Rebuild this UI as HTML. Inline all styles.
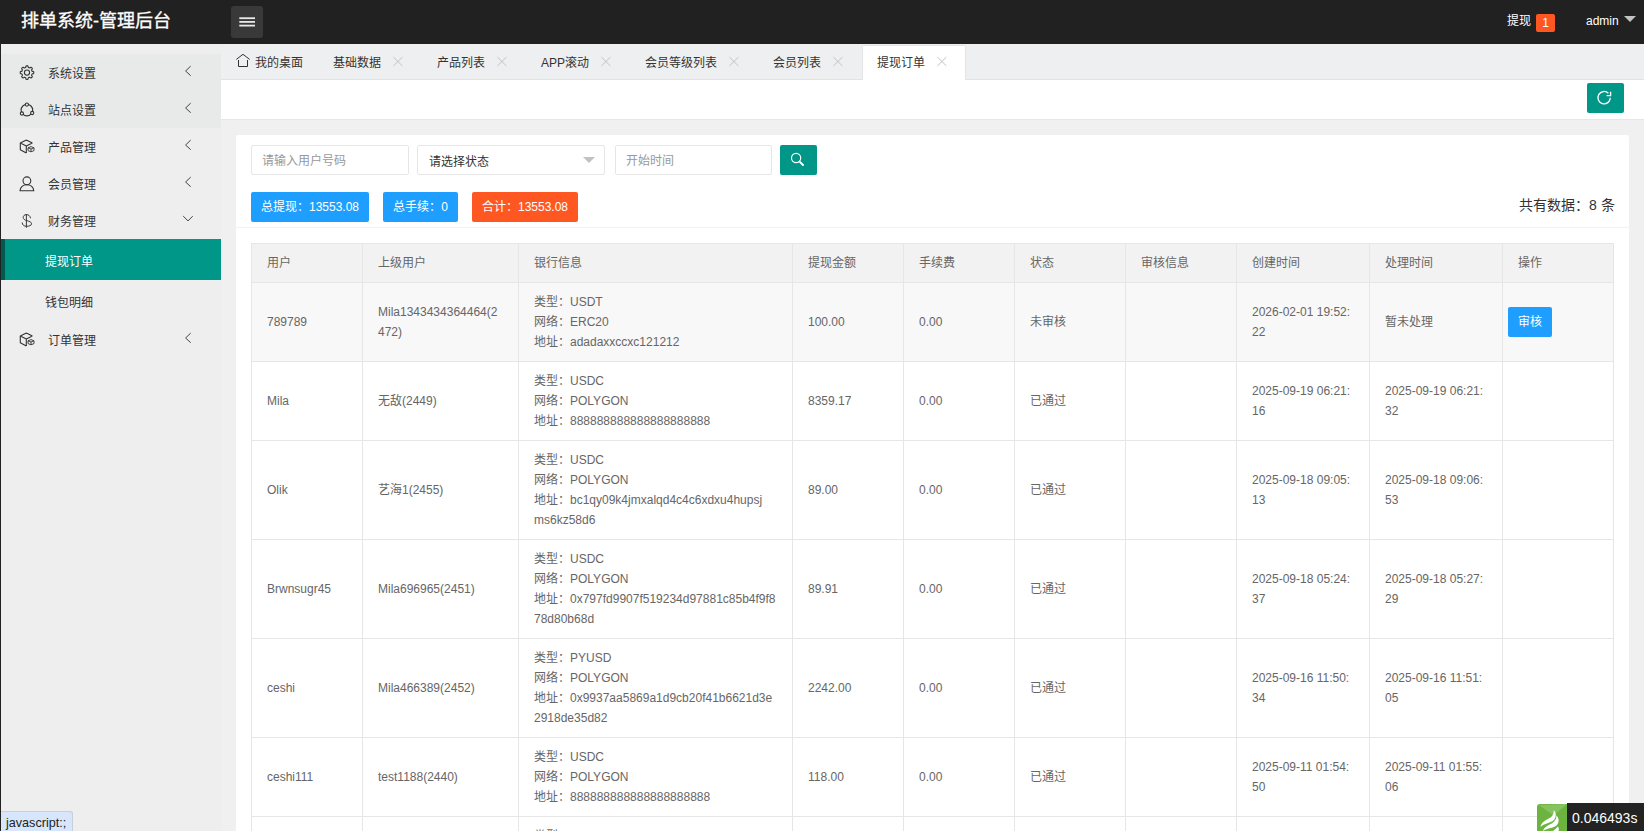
<!DOCTYPE html>
<html lang="zh-CN">
<head>
<meta charset="utf-8">
<style>
*{margin:0;padding:0;box-sizing:border-box;}
html,body{width:1644px;height:831px;overflow:hidden;}
body{position:relative;background:#f0f0f0;font-family:"Liberation Sans",sans-serif;font-size:12px;color:#333;}
.abs{position:absolute;}
#hdr{left:0;top:0;width:1644px;height:44px;background:#212121;}
#title{left:21px;top:9px;font-size:18px;line-height:24px;color:#fff;white-space:nowrap;-webkit-text-stroke:0.3px #fff;}
#burger{left:231px;top:6px;width:32px;height:32px;background:#393939;border-radius:3px;}
#side{left:0;top:44px;width:221px;height:787px;background:#eeeeee;}
#lstrip{left:0;top:44px;width:1px;height:787px;background:#222;}
.mi{position:absolute;left:1px;width:220px;height:37px;}
.mi .t{position:absolute;left:47px;top:2px;line-height:37px;font-size:12px;color:#333;white-space:nowrap;}
.mi svg{position:absolute;}
.sub{position:absolute;left:1px;width:220px;height:41px;}
.sub .t{position:absolute;left:44px;top:3px;line-height:41px;font-size:12px;color:#333;}
#tabs{left:221px;top:44px;width:1423px;height:36px;background:#eeeff1;border-bottom:1px solid #e2e2e2;}
.tab{position:absolute;margin-top:2px;height:35px;line-height:35px;font-size:12px;color:#333;white-space:nowrap;}
.x{position:absolute;top:13px;width:10px;height:10px;}
#toolbar{left:221px;top:80px;width:1423px;height:40px;background:#fff;border-bottom:1px solid #e6e6e6;}
#card{left:236px;top:135px;width:1393px;height:720px;background:#fff;border-radius:2px;}
.inp{position:absolute;top:145px;height:30px;border:1px solid #e6e6e6;border-radius:2px;background:#fff;font-size:12px;line-height:30px;padding-left:10px;color:#999;white-space:nowrap;}
.btn{position:absolute;top:192px;height:30px;line-height:30px;border-radius:2px;color:#fff;font-size:12px;text-align:center;white-space:nowrap;}
table{position:absolute;left:251px;top:243px;border-collapse:collapse;table-layout:fixed;width:1362px;color:#666;}
td,th{border:1px solid #e6e6e6;padding:9px 15px;line-height:20px;font-size:12px;font-weight:normal;text-align:left;vertical-align:middle;word-break:break-all;}
th{background:#f2f2f2;}
tr.hov td{background:#f8f8f8;}
</style>
</head>
<body>
<div id="hdr" class="abs"></div>
<div id="title" class="abs">排单系统-管理后台</div>
<div id="burger" class="abs">
<svg width="32" height="32" viewBox="0 0 32 32"><g fill="#e8e8e8"><rect x="8.3" y="11.3" width="15.7" height="1.8"/><rect x="8.3" y="15" width="15.7" height="1.8"/><rect x="8.3" y="18.7" width="15.7" height="1.8"/></g></svg>
</div>
<div class="abs" style="left:1507px;top:12px;font-size:12px;line-height:18px;color:#fff;">提现</div>
<div class="abs" style="left:1536px;top:14px;width:19px;height:18px;background:#ff5722;border-radius:2px;color:#fff;font-size:12px;line-height:18px;text-align:center;">1</div>
<div class="abs" style="left:1586px;top:12px;font-size:12px;line-height:18px;color:#fff;">admin</div>
<div class="abs" style="left:1624px;top:16px;width:0;height:0;border-left:6px solid transparent;border-right:6px solid transparent;border-top:6px solid #c2c2c2;"></div>

<div id="side" class="abs"></div>
<div id="lstrip" class="abs"></div>
<!-- sidebar items -->
<div class="mi" style="top:54px;background:#e8eaea;"><span class="t">系统设置</span></div>
<div class="mi" style="top:91px;background:#e8eaea;"><span class="t">站点设置</span></div>
<div class="mi" style="top:128px;"><span class="t">产品管理</span></div>
<div class="mi" style="top:165px;"><span class="t">会员管理</span></div>
<div class="mi" style="top:202px;"><span class="t">财务管理</span></div>
<div class="sub" style="top:239px;background:#009688;border-left:4px solid #005a52;"><span class="t" style="color:#fff;left:40px;">提现订单</span></div>
<div class="sub" style="top:280px;"><span class="t">钱包明细</span></div>
<div class="mi" style="top:321px;"><span class="t">订单管理</span></div>


<svg class="abs" style="left:0;top:44px;" width="221" height="320" viewBox="0 44 221 320" fill="none" stroke="#333" stroke-width="1.1">
<!-- gear -->
<path d="M31.85 74.61 L31.80 74.74 L31.74 74.86 L31.68 74.98 L31.61 75.11 L31.55 75.22 L31.68 75.47 L31.89 75.77 L32.09 76.10 L32.27 76.43 L32.36 76.71 L32.25 76.85 L32.13 76.98 L32.02 77.12 L31.90 77.25 L31.77 77.37 L31.65 77.50 L31.52 77.62 L31.38 77.73 L31.25 77.85 L31.11 77.96 L30.83 77.87 L30.50 77.69 L30.17 77.49 L29.87 77.28 L29.62 77.15 L29.51 77.21 L29.38 77.28 L29.26 77.34 L29.14 77.40 L29.01 77.45 L28.88 77.50 L28.75 77.55 L28.62 77.59 L28.49 77.63 L28.36 77.67 L28.28 77.94 L28.21 78.30 L28.12 78.67 L28.02 79.03 L27.88 79.29 L27.71 79.31 L27.53 79.33 L27.35 79.34 L27.18 79.35 L27.00 79.35 L26.82 79.35 L26.65 79.34 L26.47 79.33 L26.29 79.31 L26.12 79.29 L25.98 79.03 L25.88 78.67 L25.79 78.30 L25.72 77.94 L25.64 77.67 L25.51 77.63 L25.38 77.59 L25.25 77.55 L25.12 77.50 L24.99 77.45 L24.86 77.40 L24.74 77.34 L24.62 77.28 L24.49 77.21 L24.38 77.15 L24.13 77.28 L23.83 77.49 L23.50 77.69 L23.17 77.87 L22.89 77.96 L22.75 77.85 L22.62 77.73 L22.48 77.62 L22.35 77.50 L22.23 77.37 L22.10 77.25 L21.98 77.12 L21.87 76.98 L21.75 76.85 L21.64 76.71 L21.73 76.43 L21.91 76.10 L22.11 75.77 L22.32 75.47 L22.45 75.22 L22.39 75.11 L22.32 74.98 L22.26 74.86 L22.20 74.74 L22.15 74.61 L22.10 74.48 L22.05 74.35 L22.01 74.22 L21.97 74.09 L21.93 73.96 L21.66 73.88 L21.30 73.81 L20.93 73.72 L20.57 73.62 L20.31 73.48 L20.29 73.31 L20.27 73.13 L20.26 72.95 L20.25 72.78 L20.25 72.60 L20.25 72.42 L20.26 72.25 L20.27 72.07 L20.29 71.89 L20.31 71.72 L20.57 71.58 L20.93 71.48 L21.30 71.39 L21.66 71.32 L21.93 71.24 L21.97 71.11 L22.01 70.98 L22.05 70.85 L22.10 70.72 L22.15 70.59 L22.20 70.46 L22.26 70.34 L22.32 70.22 L22.39 70.09 L22.45 69.97 L22.32 69.73 L22.11 69.43 L21.91 69.10 L21.73 68.77 L21.64 68.49 L21.75 68.35 L21.87 68.22 L21.98 68.08 L22.10 67.95 L22.23 67.83 L22.35 67.70 L22.48 67.58 L22.62 67.47 L22.75 67.35 L22.89 67.24 L23.17 67.33 L23.50 67.51 L23.83 67.71 L24.13 67.92 L24.37 68.05 L24.49 67.99 L24.62 67.92 L24.74 67.86 L24.86 67.80 L24.99 67.75 L25.12 67.70 L25.25 67.65 L25.38 67.61 L25.51 67.57 L25.64 67.53 L25.72 67.26 L25.79 66.90 L25.88 66.53 L25.98 66.17 L26.12 65.91 L26.29 65.89 L26.47 65.87 L26.65 65.86 L26.82 65.85 L27.00 65.85 L27.18 65.85 L27.35 65.86 L27.53 65.87 L27.71 65.89 L27.88 65.91 L28.02 66.17 L28.12 66.53 L28.21 66.90 L28.28 67.26 L28.36 67.53 L28.49 67.57 L28.62 67.61 L28.75 67.65 L28.88 67.70 L29.01 67.75 L29.14 67.80 L29.26 67.86 L29.38 67.92 L29.51 67.99 L29.62 68.05 L29.87 67.92 L30.17 67.71 L30.50 67.51 L30.83 67.33 L31.11 67.24 L31.25 67.35 L31.38 67.47 L31.52 67.58 L31.65 67.70 L31.77 67.83 L31.90 67.95 L32.02 68.08 L32.13 68.22 L32.25 68.35 L32.36 68.49 L32.27 68.77 L32.09 69.10 L31.89 69.43 L31.68 69.73 L31.55 69.97 L31.61 70.09 L31.68 70.22 L31.74 70.34 L31.80 70.46 L31.85 70.59 L31.90 70.72 L31.95 70.85 L31.99 70.98 L32.03 71.11 L32.07 71.24 L32.34 71.32 L32.70 71.39 L33.07 71.48 L33.43 71.58 L33.69 71.72 L33.71 71.89 L33.73 72.07 L33.74 72.25 L33.75 72.42 L33.75 72.60 L33.75 72.78 L33.74 72.95 L33.73 73.13 L33.71 73.31 L33.69 73.48 L33.43 73.62 L33.07 73.72 L32.70 73.81 L32.34 73.88 L32.07 73.96 L32.03 74.09 L31.99 74.22 L31.95 74.35 L31.90 74.48 L31.85 74.61Z" stroke-linejoin="round"/>
<circle cx="27.0" cy="72.6" r="2.6"/>
<!-- share/circle -->
<circle cx="26.9" cy="110.1" r="5.8"/>
<g fill="#e8eaea"><circle cx="26.9" cy="104.6" r="1.6"/><circle cx="21.9" cy="113.5" r="1.6"/><circle cx="32.2" cy="113" r="1.6"/></g>
<!-- cube 1 -->
<g><path d="M26.3 140 L20.3 143.1 L20.3 149.8 L26.3 153 M26.3 140 L32.4 143.1 M20.3 143.1 L26.3 146 L26.3 153 M26.3 146 L32.4 143.1" stroke-linejoin="round"/>
<path d="M28 147.8 L31 146.6 L34 147.8 L34 150.6 L31 151.8 L28 150.6 Z M28 147.8 L31 149 L34 147.8 M31 149 L31 151.8" stroke-width="0.9"/></g>
<!-- user -->
<circle cx="26.9" cy="180.8" r="3.9"/>
<path d="M20 190.8 C20.5 186.5 23.3 184.7 26.9 184.7 C30.5 184.7 33.3 186.5 33.8 190.8 Z" stroke-linejoin="round"/>
<!-- dollar -->
<path d="M30.5 218.3 C30.2 215.8 28.5 214.6 26.4 214.6 C24.4 214.6 23.2 215.8 23.2 217.4 C23.2 219.2 24.8 220 26.4 220.5 C29 221.3 31.6 222 31.6 223.8 C31.6 225.4 29.2 226.3 26.4 226.3 C24 226.3 22.2 224.8 22.2 222.5 M26.4 214 L26.4 227.8" stroke-width="0.95"/>
<!-- arrows -->
<path d="M190.7 66.1 L185.6 71 L190.7 75.7 M190.7 103.1 L185.6 108 L190.7 112.7 M190.7 140.1 L185.6 145 L190.7 149.7 M190.7 177.1 L185.6 182 L190.7 186.7 M190.7 333.1 L185.6 338 L190.7 342.7 M183.2 216.1 L188 220.9 L192.7 216.2" stroke-width="0.95" stroke="#3a3a3a"/>
<g transform="translate(0 193)"><path d="M26.3 140 L20.3 143.1 L20.3 149.8 L26.3 153 M26.3 140 L32.4 143.1 M20.3 143.1 L26.3 146 L26.3 153 M26.3 146 L32.4 143.1" stroke-linejoin="round"/>
<path d="M28 147.8 L31 146.6 L34 147.8 L34 150.6 L31 151.8 L28 150.6 Z M28 147.8 L31 149 L34 147.8 M31 149 L31 151.8" stroke-width="0.9"/></g>
</svg>

<div id="tabs" class="abs"></div>
<div class="abs" style="left:862px;top:45px;width:104px;height:35px;background:#fff;border:1px solid #e4e4e4;border-bottom:none;border-radius:2px 2px 0 0;"></div>
<div class="tab" style="left:255px;top:44px;">我的桌面</div>
<div class="tab" style="left:333px;top:44px;">基础数据</div>
<div class="tab" style="left:437px;top:44px;">产品列表</div>
<div class="tab" style="left:541px;top:44px;">APP滚动</div>
<div class="tab" style="left:645px;top:44px;">会员等级列表</div>
<div class="tab" style="left:773px;top:44px;">会员列表</div>
<div class="tab" style="left:877px;top:44px;">提现订单</div>


<svg class="abs" style="left:221px;top:44px;" width="760" height="36" viewBox="221 44 760 36" fill="none">
<path d="M236.3 59.4 L243 54.3 L249.6 59.4 M238.5 60 L238.5 66.5 L247.5 66.5 L247.5 60" stroke="#333" stroke-width="1"/>
<g stroke="#c2c2c2" stroke-width="1">
<path d="M393.5 57.2 L402.3 65.8 M402.3 57.2 L393.5 65.8"/>
<path d="M497.5 57.2 L506.3 65.8 M506.3 57.2 L497.5 65.8"/>
<path d="M601.5 57.2 L610.3 65.8 M610.3 57.2 L601.5 65.8"/>
<path d="M729.5 57.2 L738.3 65.8 M738.3 57.2 L729.5 65.8"/>
<path d="M833.5 57.2 L842.3 65.8 M842.3 57.2 L833.5 65.8"/>
<path d="M937.5 57.2 L946.3 65.8 M946.3 57.2 L937.5 65.8"/>
</g>
</svg>

<div id="toolbar" class="abs"></div>
<div class="abs" style="left:1587px;top:83px;width:37px;height:30px;background:#009688;border-radius:2px;"></div>
<svg class="abs" style="left:1587px;top:83px;" width="37" height="30" viewBox="1587 83 37 30" fill="none" stroke="#fff" stroke-width="1.3">
<path d="M1610.3 97.8 A6.2 6.2 0 1 1 1608.4 93.2"/>
<path d="M1610.6 91.8 L1610.6 95.6 L1606.6 95.6"/>
</svg>

<div id="card" class="abs"></div>
<div class="inp" style="left:251px;width:158px;">请输入用户号码</div>
<div class="inp" style="left:417px;width:188px;color:#333;padding-left:11px;line-height:32px;">请选择状态</div>
<div class="inp" style="left:615px;width:157px;">开始时间</div>
<div class="abs" style="left:583px;top:157px;width:0;height:0;border-left:6px solid transparent;border-right:6px solid transparent;border-top:6px solid #c2c2c2;"></div>
<div class="abs" style="left:780px;top:145px;width:37px;height:30px;background:#009688;border-radius:2px;"></div>
<svg class="abs" style="left:780px;top:145px;" width="37" height="30" viewBox="780 145 37 30" fill="none" stroke="#fff">
<circle cx="796.1" cy="158" r="4.6" stroke-width="1.2"/>
<path d="M799.6 161.6 L803 165" stroke-width="2" stroke-linecap="round"/>
</svg>

<div class="btn" style="left:251px;width:118px;background:#1e9fff;">总提现：13553.08</div>
<div class="btn" style="left:383px;width:75px;background:#1e9fff;">总手续：0</div>
<div class="btn" style="left:472px;width:106px;background:#ff5722;">合计：13553.08</div>
<div class="abs" style="left:1519px;top:195px;font-size:14px;line-height:20px;color:#333;white-space:nowrap;">共有数据：8 条</div>
<div class="abs" style="left:236px;top:227px;width:1393px;height:1px;background:#f2f2f2;"></div>

<table>
<colgroup><col style="width:111px"><col style="width:156px"><col style="width:274px"><col style="width:111px"><col style="width:111px"><col style="width:111px"><col style="width:111px"><col style="width:133px"><col style="width:133px"><col style="width:111px"></colgroup>
<thead><tr><th>用户</th><th>上级用户</th><th>银行信息</th><th>提现金额</th><th>手续费</th><th>状态</th><th>审核信息</th><th>创建时间</th><th>处理时间</th><th>操作</th></tr></thead>
<tbody>
<tr class="hov"><td>789789</td><td>Mila1343434364464(2472)</td><td>类型：USDT<br>网络：ERC20<br>地址：adadaxxccxc121212</td><td>100.00</td><td>0.00</td><td>未审核</td><td></td><td>2026-02-01 19:52:22</td><td>暂未处理</td><td style="padding-left:5px;"><span style="display:inline-block;background:#1e9fff;color:#fff;height:30px;line-height:30px;padding:0 10px;border-radius:2px;">审核</span></td></tr>
<tr><td>Mila</td><td>无敌(2449)</td><td>类型：USDC<br>网络：POLYGON<br>地址：888888888888888888888</td><td>8359.17</td><td>0.00</td><td>已通过</td><td></td><td>2025-09-19 06:21:16</td><td>2025-09-19 06:21:32</td><td></td></tr>
<tr><td>Olik</td><td>艺海1(2455)</td><td>类型：USDC<br>网络：POLYGON<br>地址：bc1qy09k4jmxalqd4c4c6xdxu4hupsj<br>ms6kz58d6</td><td>89.00</td><td>0.00</td><td>已通过</td><td></td><td>2025-09-18 09:05:13</td><td>2025-09-18 09:06:53</td><td></td></tr>
<tr><td>Brwnsugr45</td><td>Mila696965(2451)</td><td>类型：USDC<br>网络：POLYGON<br>地址：0x797fd9907f519234d97881c85b4f9f878d80b68d</td><td>89.91</td><td>0.00</td><td>已通过</td><td></td><td>2025-09-18 05:24:37</td><td>2025-09-18 05:27:29</td><td></td></tr>
<tr><td>ceshi</td><td>Mila466389(2452)</td><td>类型：PYUSD<br>网络：POLYGON<br>地址：0x9937aa5869a1d9cb20f41b6621d3e2918de35d82</td><td>2242.00</td><td>0.00</td><td>已通过</td><td></td><td>2025-09-16 11:50:34</td><td>2025-09-16 11:51:05</td><td></td></tr>
<tr><td>ceshi111</td><td>test1188(2440)</td><td>类型：USDC<br>网络：POLYGON<br>地址：888888888888888888888</td><td>118.00</td><td>0.00</td><td>已通过</td><td></td><td>2025-09-11 01:54:50</td><td>2025-09-11 01:55:06</td><td></td></tr>
<tr><td>x</td><td>x</td><td>类型：USDC<br>网络：POLYGON<br>地址：888</td><td></td><td></td><td></td><td></td><td></td><td></td><td></td></tr>
</tbody>
</table>

<div class="abs" style="left:1px;top:811px;width:72px;height:20px;background:#d8e6fc;border:1px solid #c9cfd8;border-left:none;border-bottom:none;border-radius:0 3px 0 0;font-size:12.6px;line-height:22px;padding-left:5px;color:#222;white-space:nowrap;">javascript:;</div>
<svg class="abs" style="left:1537px;top:804px;" width="30" height="27" viewBox="0 0 30 27">
<path d="M0 3 Q0 0 3 0 L30 0 L30 27 L0 27 Z" fill="#6db33f"/>
<path d="M2 1 L16.5 11.5 L30 0 Z" fill="#86c360"/>
<path d="M3.5 23 C4 18 10 15.5 13.5 13.5 C16 12 17 9 16.7 6 C19.5 9 19.5 13 17 16 C14 19 7 19.5 3.5 23 Z" fill="#fff"/>
<path d="M6 27 C7 23 12 21 15.5 19 C18 17.5 19.5 14.5 19.5 11.5 C22 14 22.5 18 20 21 C17.5 24 10 24 6 27 Z" fill="#fff"/>
<path d="M16 27 C17.5 25.5 19.5 24.5 21 22.5 C22 24 22 26 21.5 27 Z" fill="#fff"/>
</svg>
<div class="abs" style="left:1567px;top:803px;width:77px;height:28px;background:#232323;color:#fff;font-size:14px;line-height:30px;padding-left:5px;">0.046493s</div>
</body>
</html>
